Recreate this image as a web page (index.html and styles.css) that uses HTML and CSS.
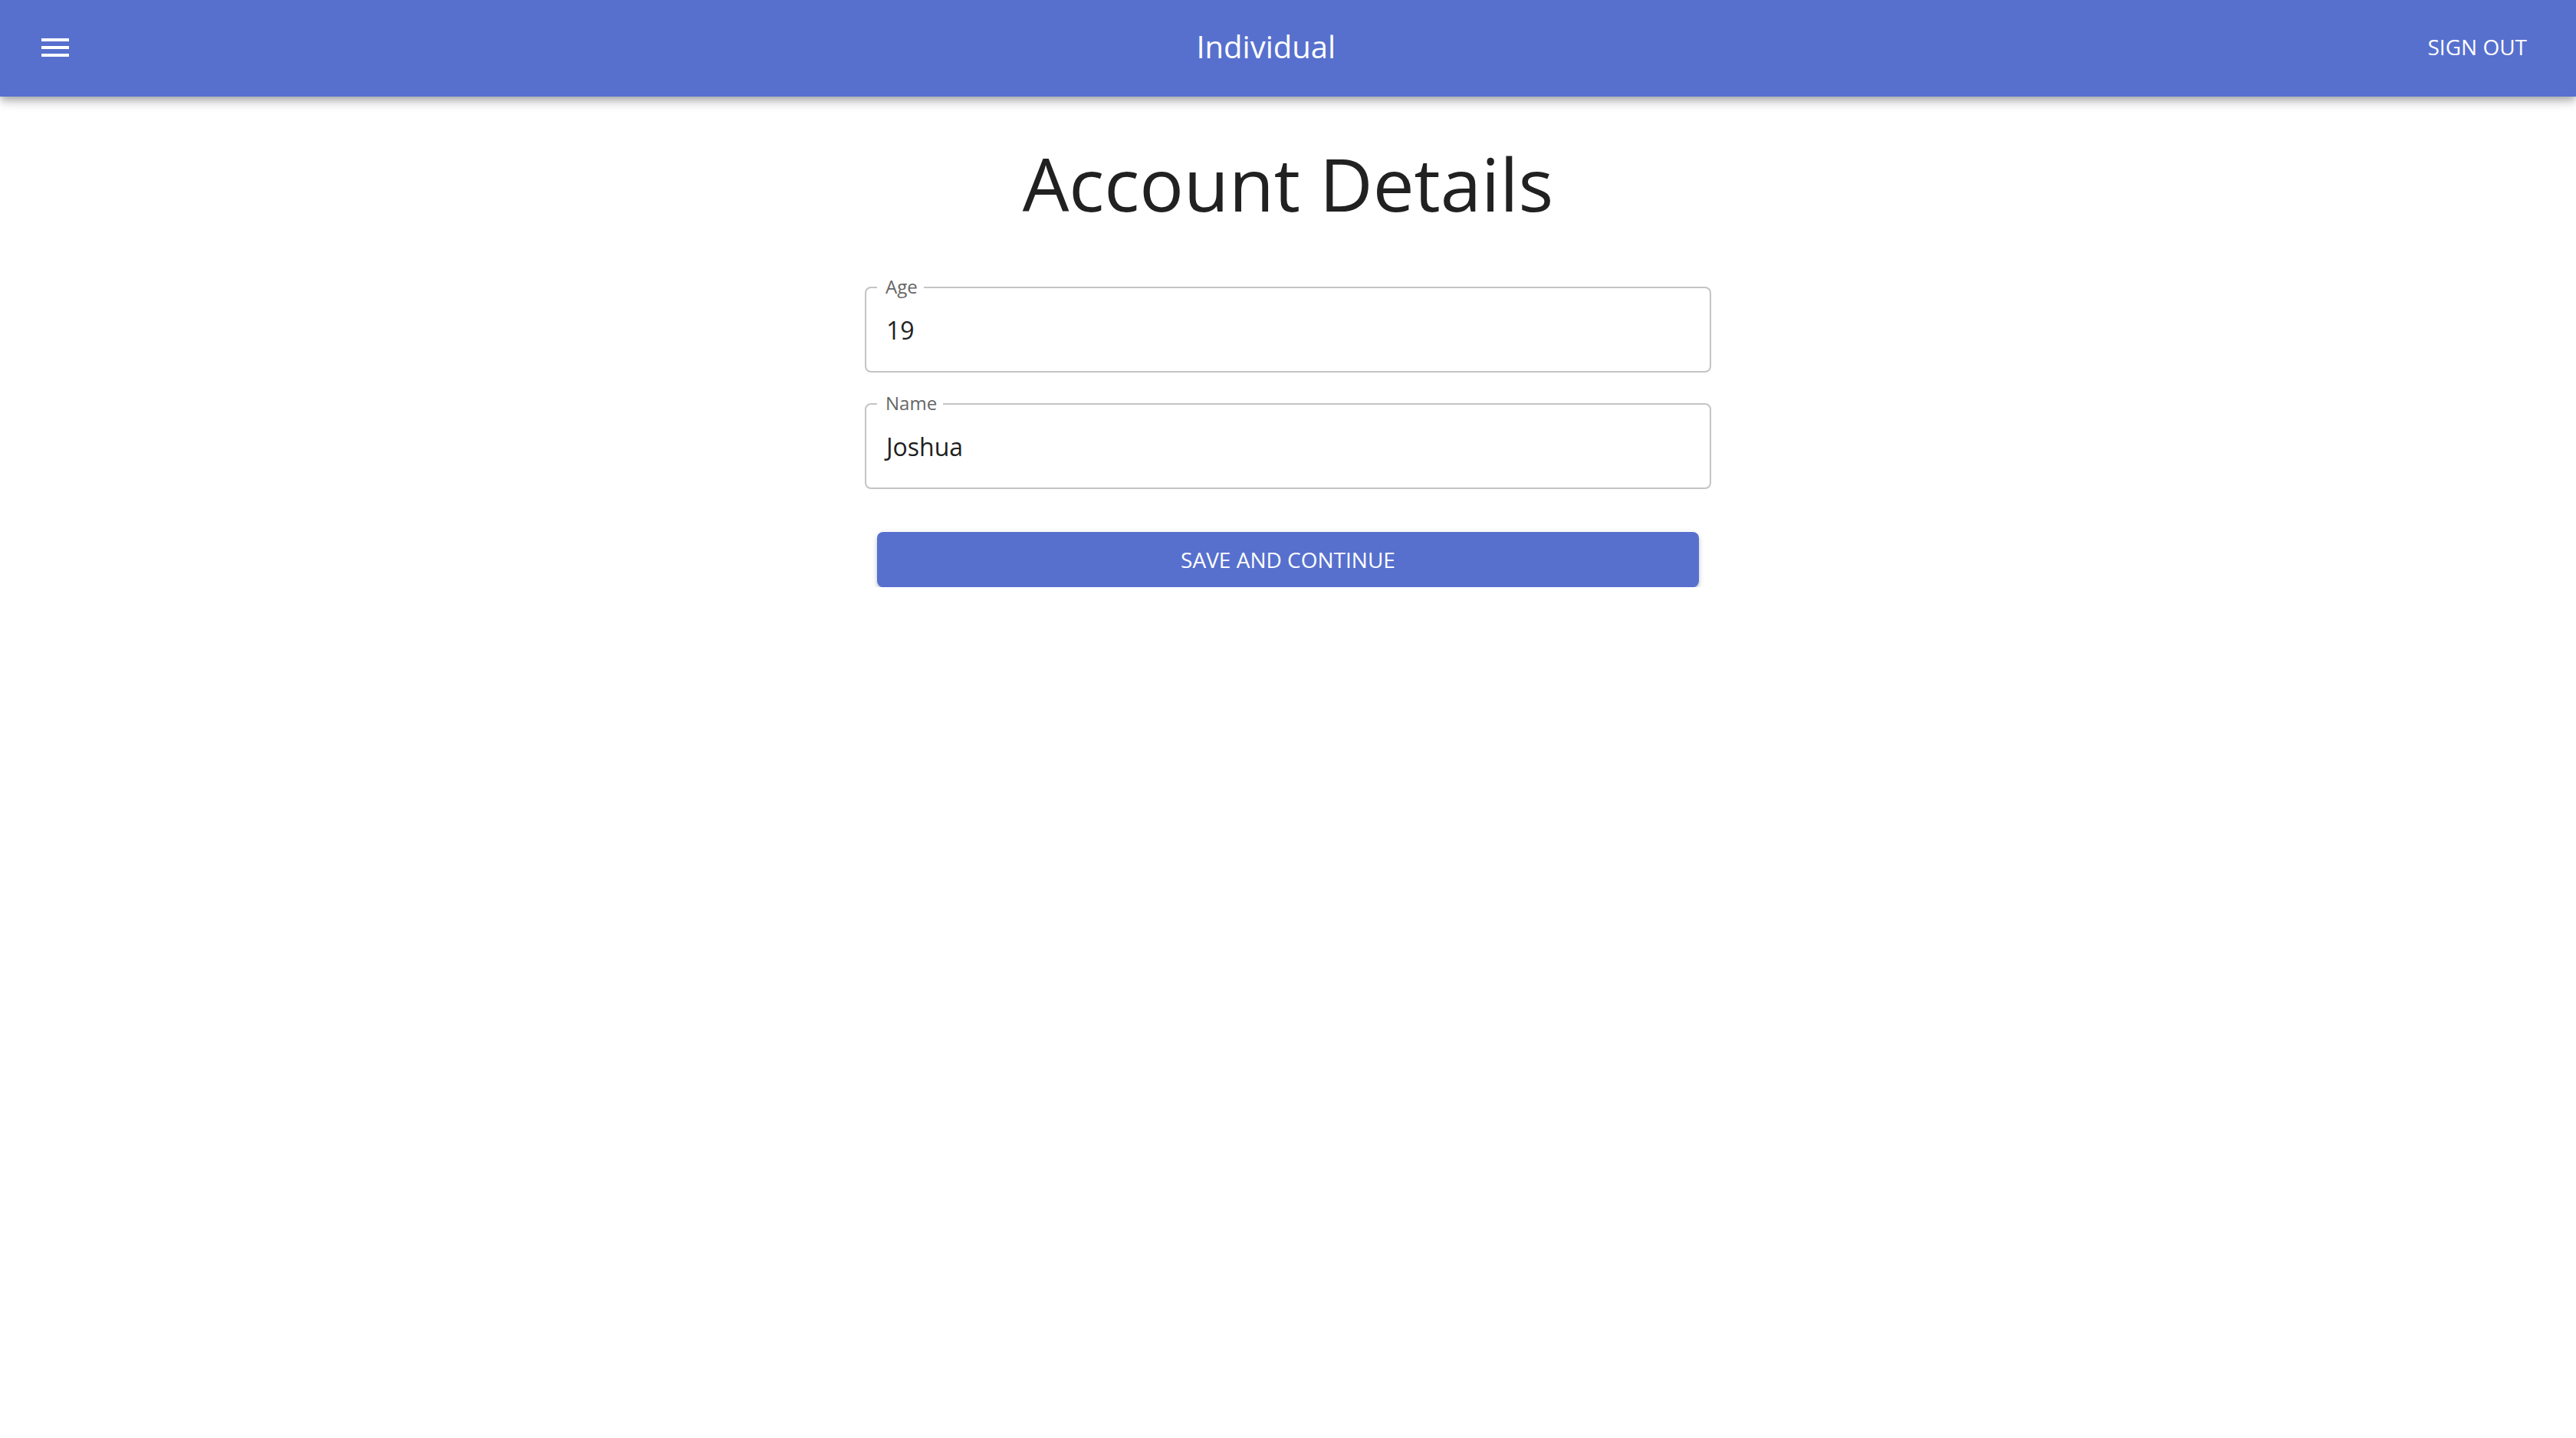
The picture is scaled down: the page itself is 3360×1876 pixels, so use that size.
FILE: index.html
```html
<!DOCTYPE html>
<html lang="en">
<head>
<meta charset="utf-8">
<title>Account Details</title>
<link rel="stylesheet" href="styles.css">
</head>
<body>
<header class="appbar">
  <button class="menu-btn" aria-label="menu">
    <svg class="menu-icon" viewBox="0 0 24 24" width="48" height="48" aria-hidden="true">
      <path fill="#fff" d="M3 18h18v-2H3v2zm0-5h18v-2H3v2zm0-7v2h18V6H3z"/>
    </svg>
  </button>
  <div class="appbar-title">Individual</div>
  <button class="signout-btn">Sign Out</button>
</header>
<main class="page">
  <h1 class="page-title">Account Details</h1>
  <form class="form">
    <div class="field">
      <span class="field-label">Age</span>
      <span class="field-value">19</span>
    </div>
    <div class="field field-next">
      <span class="field-label">Name</span>
      <span class="field-value">Joshua</span>
    </div>
    <button type="button" class="submit">Save and Continue</button>
  </form>
</main>
</body>
</html>
```

FILE: styles.css
```css
html, body {
  margin: 0;
  padding: 0;
  background: #ffffff;
}

body {
  font-family: "Open Sans", "Noto Sans", sans-serif;
  color: #212121;
}

.appbar {
  position: relative;
  z-index: 2;
  display: flex;
  align-items: center;
  height: 126px;
  box-sizing: border-box;
  padding: 0 48px 4px 48px;
  background: #5770ce;
  color: #ffffff;
  box-shadow: 0 4px 8px -2px rgba(0, 0, 0, 0.2),
              0 8px 10px 0 rgba(0, 0, 0, 0.14),
              0 2px 20px 0 rgba(0, 0, 0, 0.12);
}

.menu-btn {
  display: flex;
  align-items: center;
  justify-content: center;
  width: 96px;
  height: 96px;
  padding: 24px;
  margin: 2px 32px 0 -24px;
  border: 0;
  background: none;
  cursor: pointer;
}

.menu-icon {
  display: block;
  width: 48px;
  height: 48px;
}

.appbar-title {
  flex: 1;
  text-align: center;
  font-size: 40px;
  font-weight: 400;
  line-height: 1.6;
}

.signout-btn {
  padding: 12px 16px;
  border: 0;
  background: none;
  color: #ffffff;
  font-family: inherit;
  font-size: 28px;
  font-weight: 400;
  line-height: 1.75;
  text-transform: uppercase;
  cursor: pointer;
}

.page {
  display: flex;
  flex-direction: column;
  align-items: center;
  padding-top: 57px;
}

.page-title {
  margin: 0;
  font-size: 96px;
  font-weight: 400;
  line-height: 112px;
  color: #212121;
}

.form {
  width: 1104px;
  margin-top: 79px;
  display: flex;
  flex-direction: column;
}

.field {
  position: relative;
  display: flex;
  align-items: center;
  height: 112px;
  box-sizing: border-box;
  padding: 0 26px;
  border: 2px solid #c4c4c4;
  border-radius: 8px;
}

.field-next {
  margin-top: 40px;
}

.field-label {
  position: absolute;
  top: -14px;
  left: 14px;
  padding: 0 8px 0 11px;
  background: #ffffff;
  font-size: 24px;
  line-height: 24px;
  color: #666666;
}

.field-value {
  font-size: 32px;
  color: #212121;
}

.submit {
  margin: 56px 16px 0 16px;
  height: 72px;
  border: 0;
  border-radius: 8px;
  background: #5770ce;
  color: #ffffff;
  font-family: inherit;
  font-size: 28px;
  font-weight: 400;
  text-transform: uppercase;
  cursor: pointer;
  box-shadow: 0 6px 2px -4px rgba(0, 0, 0, 0.2),
              0 4px 4px 0 rgba(0, 0, 0, 0.14),
              0 2px 10px 0 rgba(0, 0, 0, 0.12);
}
```
